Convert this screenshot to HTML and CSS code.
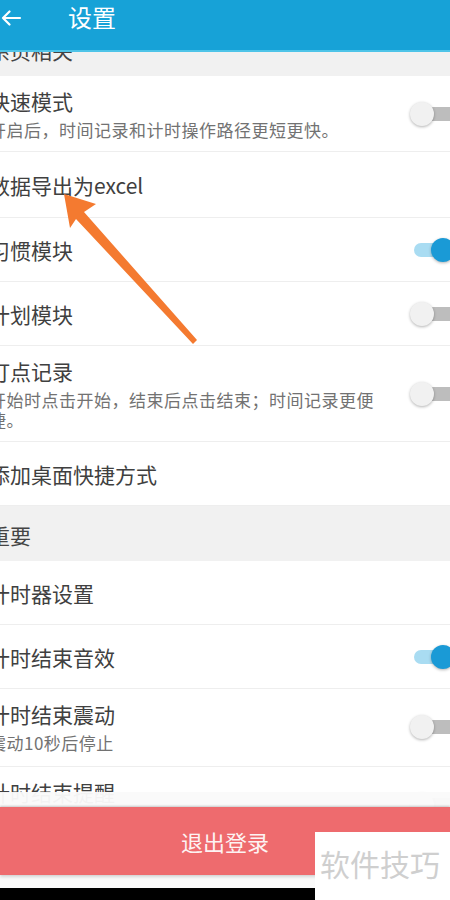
FILE: index.html
```html
<!DOCTYPE html>
<html lang="zh-CN">
<head>
    <meta charset="UTF-8">
    <meta name="viewport" content="width=device-width, initial-scale=1.0">
    <title>设置</title>
    <link rel="stylesheet" href="styles.css">
</head>
<body>
    <div class="screen">
        <div class="app-bar">
            <svg class="back-icon" width="22" height="16" viewBox="0 0 22 16">
                <path d="M20 8H3M9.5 1.5L3 8l6.5 6.5" fill="none" stroke="#fff" stroke-width="2.2" stroke-linecap="round" stroke-linejoin="round"/>
            </svg>
            <span class="app-title">设置</span>
        </div>

        <div class="settings">
            <div class="section-title">系页相关</div>

            <div class="row">
                <div class="row-text">
                    <div class="row-title">快速模式</div>
                    <div class="row-desc">开启后，时间记录和计时操作路径更短更快。</div>
                </div>
                <div class="switch"><span class="knob"></span></div>
            </div>
            <div class="row row-single row-tall">
                <div class="row-text">
                    <div class="row-title">数据导出为excel</div>
                </div>
            </div>
            <div class="row row-single">
                <div class="row-text">
                    <div class="row-title">习惯模块</div>
                </div>
                <div class="switch on"><span class="knob"></span></div>
            </div>
            <div class="row row-single">
                <div class="row-text">
                    <div class="row-title">计划模块</div>
                </div>
                <div class="switch"><span class="knob"></span></div>
            </div>
            <div class="row">
                <div class="row-text">
                    <div class="row-title">打点记录</div>
                    <div class="row-desc">开始时点击开始，结束后点击结束；时间记录更便捷。</div>
                </div>
                <div class="switch"><span class="knob"></span></div>
            </div>
            <div class="row row-single">
                <div class="row-text">
                    <div class="row-title">添加桌面快捷方式</div>
                </div>
            </div>

            <div class="section-title">重要</div>

            <div class="row row-single">
                <div class="row-text">
                    <div class="row-title">计时器设置</div>
                </div>
            </div>
            <div class="row row-single">
                <div class="row-text">
                    <div class="row-title">计时结束音效</div>
                </div>
                <div class="switch on"><span class="knob"></span></div>
            </div>
            <div class="row row-vibrate">
                <div class="row-text">
                    <div class="row-title">计时结束震动</div>
                    <div class="row-desc">震动10秒后停止</div>
                </div>
                <div class="switch"><span class="knob"></span></div>
            </div>
            <div class="row">
                <div class="row-text">
                    <div class="row-title">计时结束提醒</div>
                    <div class="row-desc">提醒</div>
                </div>
                <div class="switch"><span class="knob"></span></div>
            </div>
        </div>

        <div class="footer">
            <button class="logout-btn">退出登录</button>
        </div>
        <div class="nav-bar"></div>

        <div class="watermark">软件技巧</div>

        <svg class="pointer" width="450" height="900" viewBox="0 0 450 900">
            <polygon points="64,194 96,204 84,212 197,340 193,344 76,219 70,228" fill="#f47a30"/>
        </svg>
    </div>
</body>
</html>
```

FILE: styles.css
```css
* {
    box-sizing: border-box;
}

html, body {
    margin: 0;
    padding: 0;
}

body {
    font-family: "Noto Sans CJK SC", "Noto Sans", sans-serif;
    background: #fff;
    width: 450px;
    height: 900px;
    overflow: hidden;
}

.screen {
    position: relative;
    width: 450px;
    height: 900px;
    overflow: hidden;
    background: #fff;
}

.app-bar {
    position: relative;
    z-index: 2;
    height: 52px;
    background: #17a2d7;
    border-bottom: 2px solid #4ec4e8;
    display: flex;
    align-items: flex-start;
    color: #fff;
}

.back-icon {
    margin: 10px 0 0 0;
}

.app-title {
    margin-left: 46px;
    font-size: 24px;
    line-height: 34px;
}

.settings {
    width: 473px;
    margin-left: -11px;
    margin-top: -31px;
}

.section-title {
    height: 55px;
    padding-top: 14px;
    background: #f1f1f1;
    font-size: 21px;
    line-height: 30px;
    color: #444;
}

.row {
    display: flex;
    align-items: center;
    padding: 12px 0 11px;
    border-bottom: 1px solid #eeeeee;
    background: #fff;
}

.row-single {
    height: 64px;
    padding: 0;
}

.row-tall {
    height: 66px;
}

.row-vibrate {
    padding-bottom: 13px;
}

.row-text {
    flex: 1;
    min-width: 0;
    padding-right: 30px;
}

.row-title {
    font-size: 21px;
    line-height: 26px;
    color: #404040;
}

.row-desc {
    margin-top: 6px;
    font-size: 17px;
    line-height: 20px;
    letter-spacing: 0.5px;
    color: #727272;
}

.switch {
    position: relative;
    flex: none;
    width: 52px;
    height: 24px;
}

.switch::before {
    content: "";
    position: absolute;
    left: 4px;
    right: 4px;
    top: 5px;
    height: 14px;
    border-radius: 7px;
    background: #bdbdbd;
}

.knob {
    position: absolute;
    left: 0;
    top: 0;
    width: 24px;
    height: 24px;
    border-radius: 50%;
    background: #f1f1f1;
    box-shadow: 0 1px 3px rgba(0,0,0,0.3);
}

.switch.on::before {
    background: #a9dcf2;
}

.switch.on .knob {
    left: 21px;
    background: #1a9ad6;
}

.footer {
    position: absolute;
    left: 0;
    right: 0;
    top: 792px;
    height: 96px;
    padding: 15px 0 13px;
    background: rgba(250,250,250,0.96);
}

.logout-btn {
    display: block;
    width: 100%;
    height: 68px;
    border: none;
    margin: 0;
    background: #ee6b6e;
    color: #fdf3f3;
    font-family: "Noto Sans CJK SC", sans-serif;
    font-size: 22px;
    box-shadow: 0 -1px 2px rgba(0,0,0,0.2), 0 2px 3px rgba(0,0,0,0.15);
}

.nav-bar {
    position: absolute;
    left: 0;
    right: 0;
    top: 888px;
    height: 12px;
    background: #000;
}

.watermark {
    position: absolute;
    left: 315px;
    top: 832px;
    width: 135px;
    height: 68px;
    background: #fff;
    color: #cfcfcf;
    font-size: 30px;
    line-height: 62px;
    padding-left: 5px;
    white-space: nowrap;
}

.pointer {
    position: absolute;
    left: 0;
    top: 0;
    pointer-events: none;
}
```
